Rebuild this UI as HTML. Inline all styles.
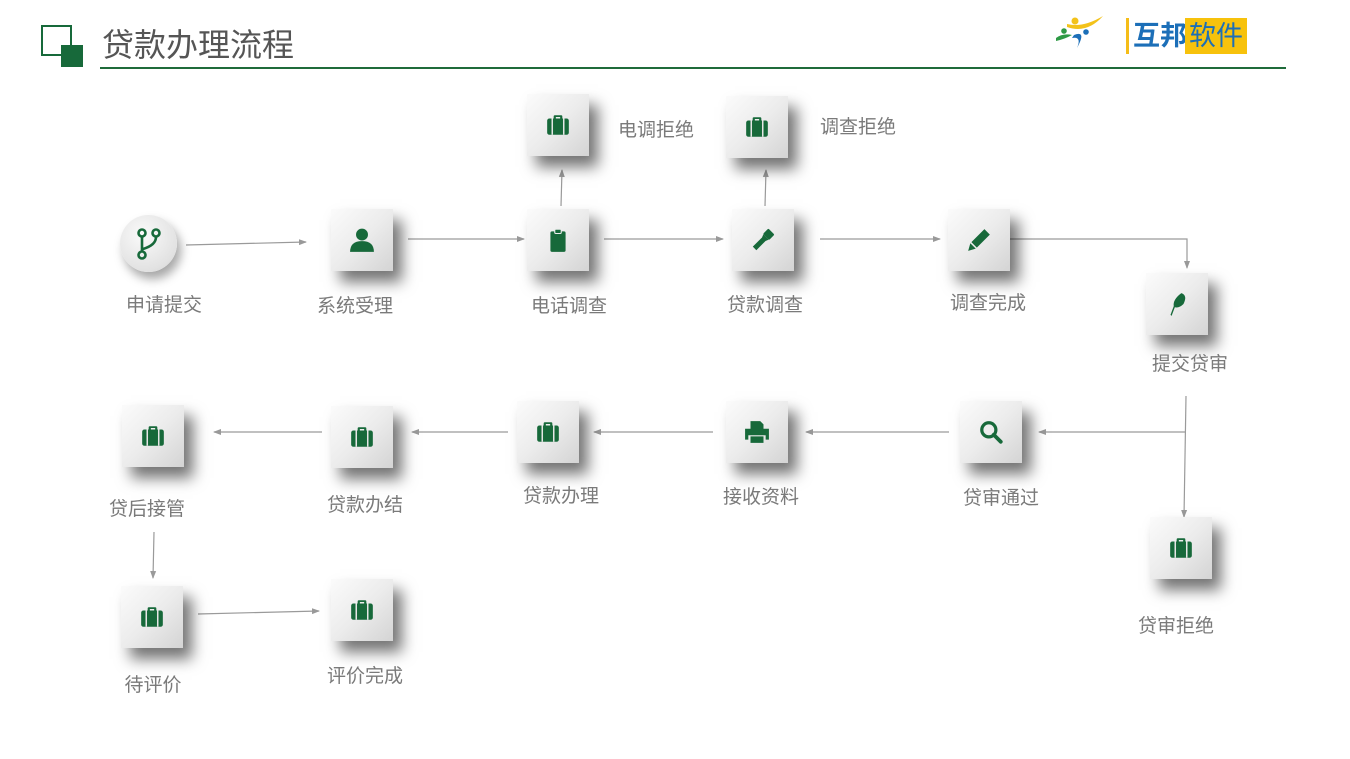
<!DOCTYPE html>
<html><head><meta charset="utf-8"><style>
body{margin:0;width:1350px;height:759px;background:#fff;position:relative;overflow:hidden;font-family:"Liberation Sans","Noto Sans CJK SC",sans-serif}
.b{position:absolute;width:62px;height:62px;background:linear-gradient(135deg,#fbfbfb 0%,#ececec 50%,#d4d4d4 100%);box-shadow:9px 11px 14px rgba(0,0,0,.55);display:flex;align-items:center;justify-content:center}
.b svg{width:26px;height:26px}
.t{position:absolute;font-size:19px;color:#7a7a7a;transform:translateX(-50%);white-space:nowrap;line-height:20px}
.t2{position:absolute;font-size:19px;color:#7a7a7a;white-space:nowrap;line-height:20px}
</style></head><body>
<svg width="0" height="0" style="position:absolute"><defs>
<symbol id="bc" viewBox="0 0 24 24"><path fill="#17693a" d="M9 3h6a1 1 0 0 1 1 1v2h4a2 2 0 0 1 2 2v11a2 2 0 0 1-2 2H4a2 2 0 0 1-2-2V8a2 2 0 0 1 2-2h4V4a1 1 0 0 1 1-1zm1 1.6V6h4V4.6z"/><rect x="6" y="6" width="1.4" height="15" fill="#e6e6e6"/><rect x="16.6" y="6" width="1.4" height="15" fill="#e6e6e6"/></symbol>
</defs></svg>

<div style="position:absolute;left:41px;top:25px;width:31px;height:31px;border:2px solid #17693a;box-sizing:border-box"></div>
<div style="position:absolute;left:61px;top:45px;width:22px;height:22px;background:#17693a"></div>
<div style="position:absolute;left:102px;top:25px;font-size:32px;color:#555;line-height:40px">贷款办理流程</div>
<div style="position:absolute;left:100px;top:67px;width:1186px;height:2px;background:#1f6b3a"></div>
<svg style="position:absolute;left:1055px;top:14px" width="50" height="38" viewBox="0 0 50 38"><path d="M12 10 Q28 14 48 2 Q32 20 12 13z" fill="#f3c21a"/><circle cx="20" cy="7" r="3.5" fill="#f3c21a"/><path d="M1 24 Q8 19 17 21 Q10 25 1 27z" fill="#2e9a45"/><circle cx="9" cy="17" r="2.8" fill="#2e9a45"/><path d="M19 21 Q32 16 22 34 Q27 22 17 24z" fill="#1c6fb8"/><circle cx="31" cy="18" r="2.8" fill="#1c6fb8"/></svg>
<div style="position:absolute;left:1126px;top:18px;width:3px;height:36px;background:#f5bd18"></div>
<div style="position:absolute;left:1133px;top:18px;font-size:27px;font-weight:bold;color:#1c6fb8;line-height:36px">互邦</div>
<div style="position:absolute;left:1185px;top:18px;width:62px;height:36px;background:#f7c20c;font-size:27px;color:#1c6fb8;line-height:36px;text-align:center">软件</div>

<svg style="position:absolute;left:0;top:0" width="1350" height="759">
<defs><marker id="a" markerWidth="8" markerHeight="8" refX="7" refY="4" orient="auto" markerUnits="userSpaceOnUse"><path d="M0 1L8 4L0 7z" fill="#999"/></marker></defs>
<g stroke="#9a9a9a" stroke-width="1.2" fill="none" marker-end="url(#a)">
<line x1="186" y1="245" x2="306" y2="242"/>
<line x1="408" y1="239" x2="524" y2="239"/>
<line x1="604" y1="239" x2="723" y2="239"/>
<line x1="820" y1="239" x2="940" y2="239"/>
<polyline points="1010,239 1187,239 1187,268"/>
<line x1="561" y1="206" x2="562" y2="170"/>
<line x1="765" y1="206" x2="766" y2="170"/>
<line x1="1186" y1="432" x2="1039" y2="432"/>
<line x1="1186" y1="396" x2="1184" y2="517"/>
<line x1="949" y1="432" x2="806" y2="432"/>
<line x1="713" y1="432" x2="594" y2="432"/>
<line x1="508" y1="432" x2="412" y2="432"/>
<line x1="322" y1="432" x2="214" y2="432"/>
<line x1="154" y1="532" x2="153" y2="578"/>
<line x1="198" y1="614" x2="319" y2="611"/>
</g></svg>

<div style="position:absolute;left:120px;top:215px;width:57px;height:57px;border-radius:50%;background:radial-gradient(circle at 40% 35%,#fafafa,#e2e2e2 70%,#d0d0d0);box-shadow:4px 7px 10px rgba(0,0,0,.35);display:flex;align-items:center;justify-content:center">
<svg width="26" height="34" viewBox="0 0 26 34"><g fill="none" stroke="#17693a" stroke-width="2.6"><circle cx="6" cy="6" r="3.5"/><circle cx="20" cy="6" r="3.5"/><circle cx="6" cy="28" r="3.5"/><path d="M6 10V24M20 10Q20 18 7 22"/></g></svg></div>

<div class="b" style="left:331px;top:209px"><svg viewBox="0 0 24 24"><circle cx="12" cy="7" r="5.5" fill="#17693a"/><path d="M1 23Q1 13 12 13Q23 13 23 23z" fill="#17693a"/></svg></div>
<div class="b" style="left:527px;top:209px"><svg viewBox="0 0 24 24"><rect x="5" y="4" width="14" height="19" rx="1.5" fill="#17693a"/><rect x="9" y="2" width="6" height="4" rx="1" fill="#17693a" stroke="#eee" stroke-width="1"/></svg></div>
<div class="b" style="left:732px;top:209px"><svg viewBox="0 0 24 24"><g transform="rotate(45 12 12)"><rect x="8" y="1" width="8" height="7" rx="1" fill="#17693a"/><path d="M8.5 8h7l-1.2 3v12h-4.6V11z" fill="#17693a"/></g></svg></div>
<div class="b" style="left:948px;top:209px"><svg viewBox="0 0 24 24"><path d="M17 2l5 5-12 12-5-5z M4 15l5 5-7 2z" fill="#17693a"/></svg></div>
<div class="b" style="left:1146px;top:273px"><svg viewBox="0 0 24 24"><path d="M16 2Q22 4 18 12Q14 16 10 15L7 23 6 22 9 14Q8 8 16 2z" fill="#17693a"/></svg></div>
<div class="b" style="left:527px;top:94px"><svg><use href="#bc"/></svg></div>
<div class="b" style="left:726px;top:96px"><svg><use href="#bc"/></svg></div>
<div class="b" style="left:960px;top:401px"><svg viewBox="0 0 24 24"><circle cx="10" cy="10" r="6.5" fill="none" stroke="#17693a" stroke-width="3"/><path d="M14.5 14.5L21 21" stroke="#17693a" stroke-width="3.5" stroke-linecap="round"/></svg></div>
<div class="b" style="left:726px;top:401px"><svg viewBox="0 0 24 24"><path d="M6 2h9l3 3v4H6z M1 9h22v10h-3v-4H4v4H1z M6 16h12v6H6z" fill="#17693a"/></svg></div>
<div class="b" style="left:517px;top:401px"><svg><use href="#bc"/></svg></div>
<div class="b" style="left:331px;top:406px"><svg><use href="#bc"/></svg></div>
<div class="b" style="left:122px;top:405px"><svg><use href="#bc"/></svg></div>
<div class="b" style="left:1150px;top:517px"><svg><use href="#bc"/></svg></div>
<div class="b" style="left:121px;top:586px"><svg><use href="#bc"/></svg></div>
<div class="b" style="left:331px;top:579px"><svg><use href="#bc"/></svg></div>

<div class="t" style="left:164px;top:296px">申请提交</div>
<div class="t" style="left:355px;top:297px">系统受理</div>
<div class="t" style="left:569px;top:297px">电话调查</div>
<div class="t" style="left:765px;top:296px">贷款调查</div>
<div class="t" style="left:988px;top:294px">调查完成</div>
<div class="t" style="left:1190px;top:355px">提交贷审</div>
<div class="t2" style="left:618px;top:121px">电调拒绝</div>
<div class="t2" style="left:820px;top:118px">调查拒绝</div>
<div class="t" style="left:1001px;top:489px">贷审通过</div>
<div class="t" style="left:761px;top:488px">接收资料</div>
<div class="t" style="left:561px;top:487px">贷款办理</div>
<div class="t" style="left:365px;top:496px">贷款办结</div>
<div class="t" style="left:147px;top:500px">贷后接管</div>
<div class="t" style="left:1176px;top:617px">贷审拒绝</div>
<div class="t" style="left:153px;top:676px">待评价</div>
<div class="t" style="left:365px;top:667px">评价完成</div>
</body></html>
